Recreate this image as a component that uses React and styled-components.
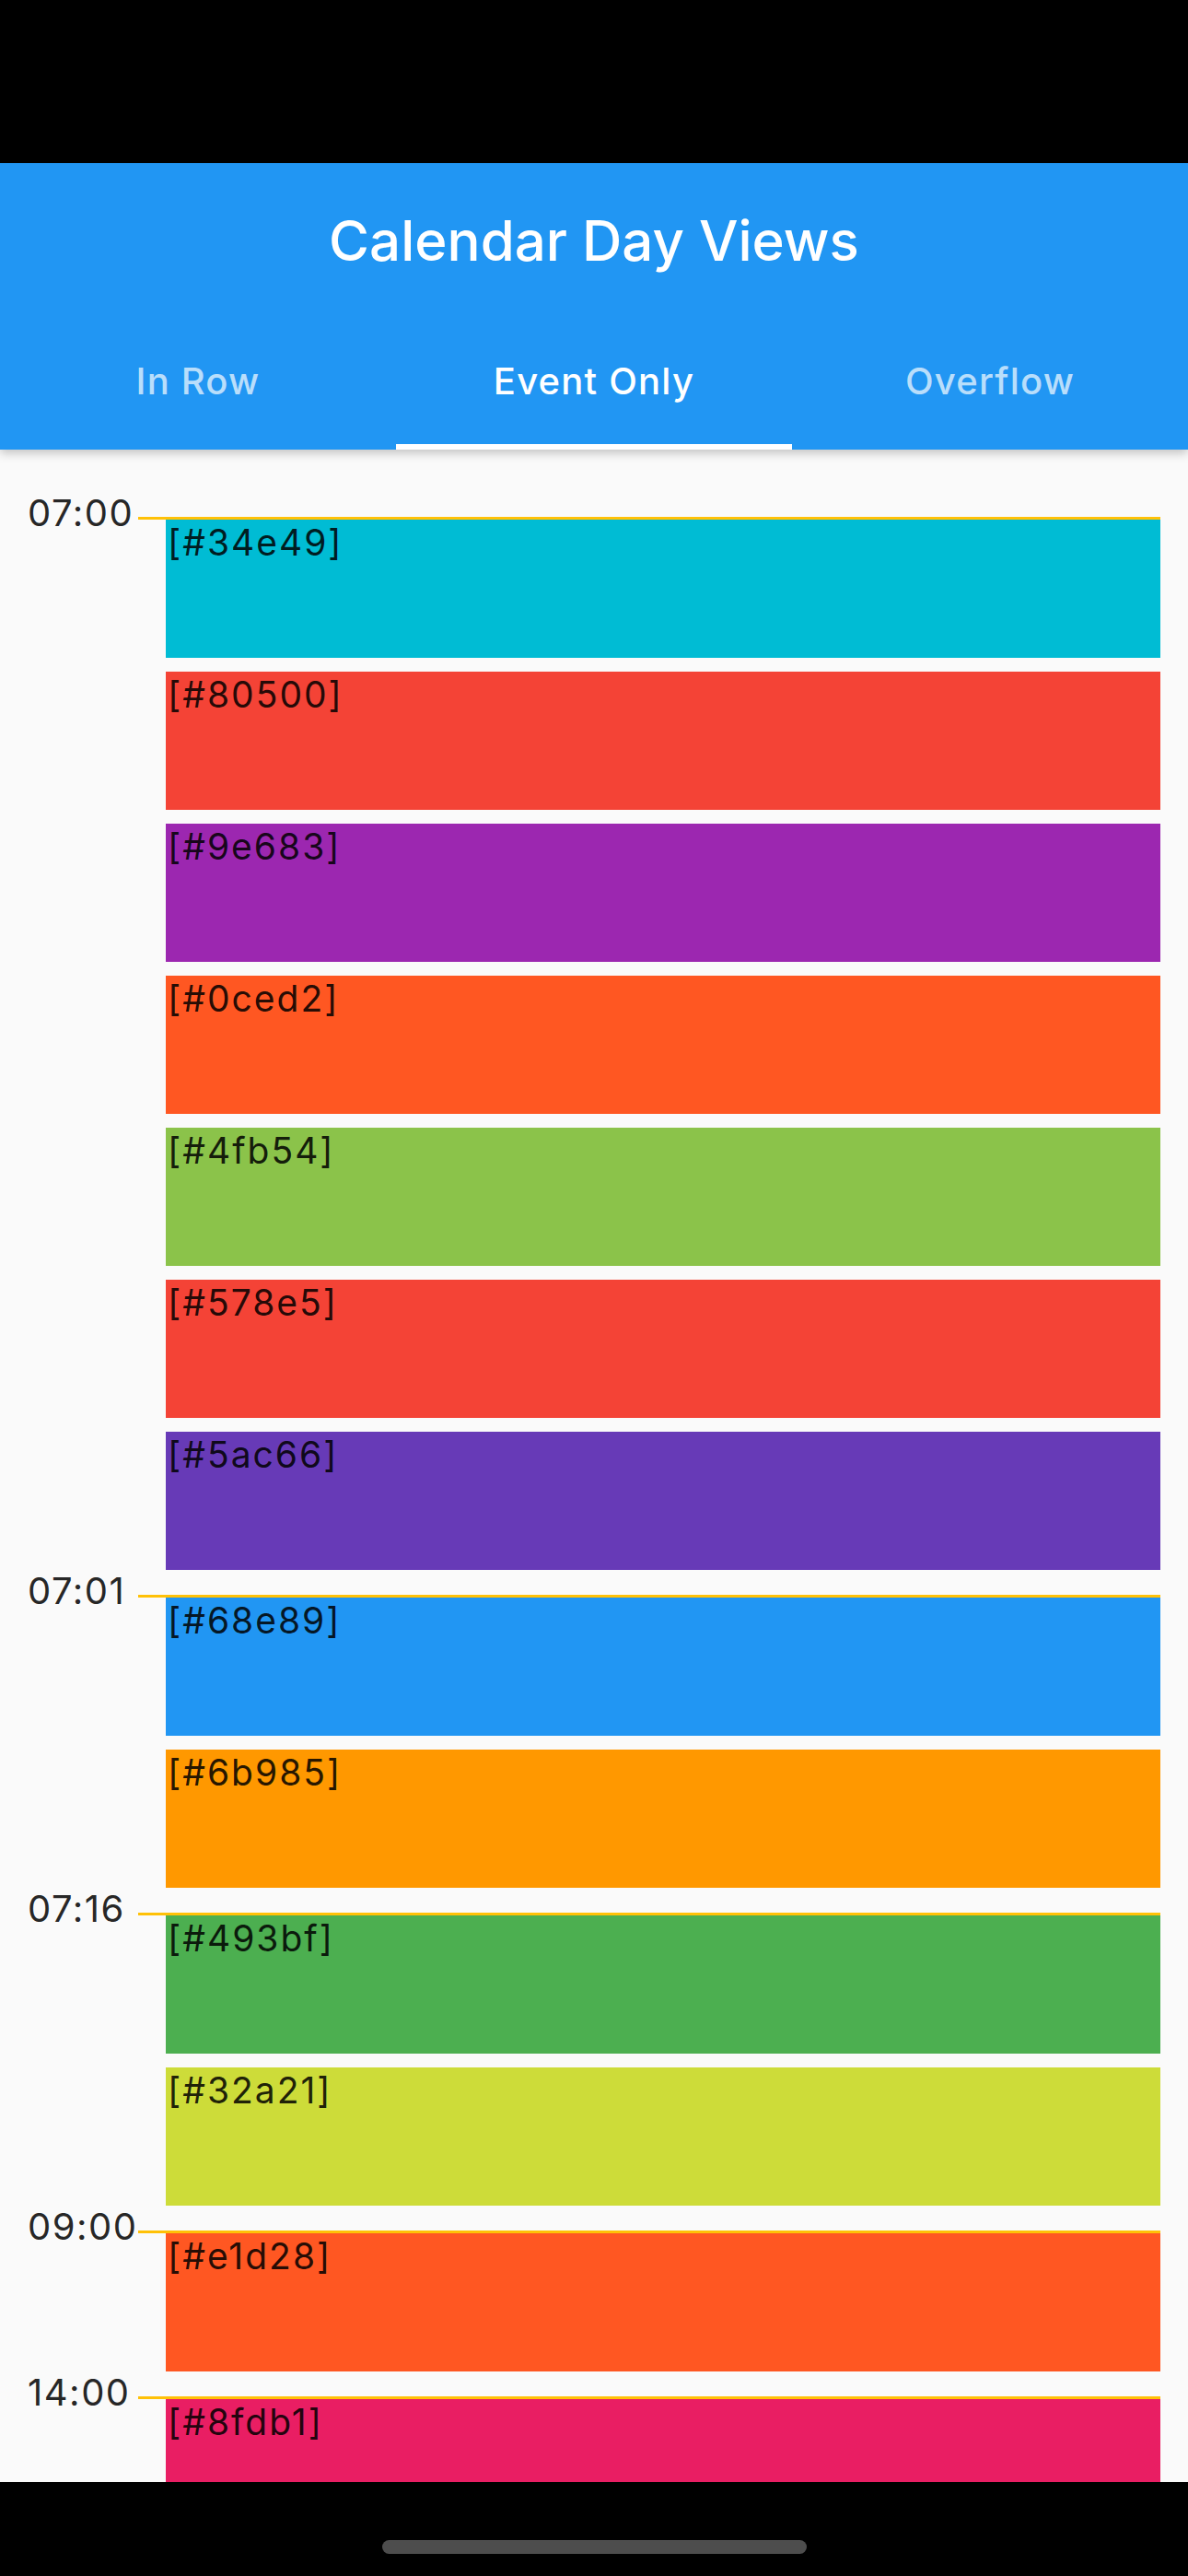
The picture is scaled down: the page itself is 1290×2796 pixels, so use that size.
import styled, { createGlobalStyle } from "styled-components";

const groups = [
  {
    time: "07:00",
    events: [
      ["34e49", "#00BCD4"],
      ["80500", "#F44336"],
      ["9e683", "#9C27B0"],
      ["0ced2", "#FF5722"],
      ["4fb54", "#8BC34A"],
      ["578e5", "#F44336"],
      ["5ac66", "#673AB7"],
    ],
  },
  {
    time: "07:01",
    events: [
      ["68e89", "#2196F3"],
      ["6b985", "#FF9800"],
    ],
  },
  {
    time: "07:16",
    events: [
      ["493bf", "#4CAF50"],
      ["32a21", "#CDDC39"],
    ],
  },
  { time: "09:00", events: [["e1d28", "#FF5722"]] },
  { time: "14:00", events: [["8fdb1", "#E91E63"]] },
];

const tabs = ["In Row", "Event Only", "Overflow"];

export default function App() {
  return (
    <Screen>
      <GlobalStyle />
      <StatusBar />
      <AppBar>
        <Title>Calendar Day Views</Title>
        <TabBar>
          {tabs.map((t, i) => (
            <Tab key={t} $active={i === 1}>
              {t}
            </Tab>
          ))}
        </TabBar>
      </AppBar>
      <Content>
        {groups.map((g) => (
          <Group key={g.time}>
            <TimeLabel>{g.time}</TimeLabel>
            <Track>
              <StartLine />
              <Events>
                {g.events.map(([id, color]) => (
                  <Event key={id} $color={color}>
                    [#{id}]
                  </Event>
                ))}
              </Events>
            </Track>
          </Group>
        ))}
      </Content>
      <NavBar>
        <Handle />
      </NavBar>
    </Screen>
  );
}

const GlobalStyle = createGlobalStyle`
  body {
    margin: 0;
    background: #000;
    font-family: Inter, Roboto, "Noto Sans", sans-serif;
  }
`;

const Screen = styled.div`
  width: 1290px;
  height: 2796px;
  display: flex;
  flex-direction: column;
  background: #fafafa;
  overflow: hidden;
`;

const StatusBar = styled.div`
  height: 177px;
  flex-shrink: 0;
  background: #000;
`;

const AppBar = styled.header`
  position: relative;
  z-index: 1;
  flex-shrink: 0;
  background: #2196f3;
  box-shadow: 0 4px 10px rgba(0, 0, 0, 0.22);
`;

const Title = styled.h1`
  margin: 0;
  height: 168px;
  display: flex;
  align-items: center;
  justify-content: center;
  color: #fff;
  font-size: 60px;
  font-weight: 500;
`;

const TabBar = styled.nav`
  display: grid;
  grid-template-columns: repeat(3, 1fr);
  height: 143px;
`;

const Tab = styled.div`
  display: flex;
  align-items: center;
  justify-content: center;
  color: ${(p) => (p.$active ? "#fff" : "rgba(255, 255, 255, 0.7)")};
  font-size: 40px;
  font-weight: 500;
  letter-spacing: 1.2px;
  border-bottom: 6px solid ${(p) => (p.$active ? "#fff" : "transparent")};
`;

const Content = styled.main`
  flex: 1;
  min-height: 0;
  overflow: hidden;
  padding-top: 73px;
  display: flex;
  flex-direction: column;
  gap: 27px;
`;

const Group = styled.section`
  display: grid;
  grid-template-columns: 150px 1110px;
  flex-shrink: 0;
`;

const TimeLabel = styled.div`
  margin-top: -25px;
  padding-left: 30px;
  height: 42px;
  line-height: 42px;
  font-size: 40px;
  letter-spacing: 1.5px;
  color: rgba(0, 0, 0, 0.87);
`;

const Track = styled.div`
  display: flex;
  flex-direction: column;
`;

const StartLine = styled.div`
  height: 3px;
  background: #ffc107;
`;

const Events = styled.div`
  display: flex;
  flex-direction: column;
  gap: 15px;
  padding-left: 30px;
`;

const Event = styled.div`
  height: 150px;
  flex-shrink: 0;
  box-sizing: border-box;
  padding: 1px 0 0 2px;
  background: ${(p) => p.$color};
  color: rgba(0, 0, 0, 0.87);
  font-size: 39px;
  line-height: 47px;
  letter-spacing: 2px;
`;

const NavBar = styled.footer`
  height: 102px;
  flex-shrink: 0;
  background: #000;
  display: flex;
  justify-content: center;
  padding-top: 63px;
  box-sizing: border-box;
`;

const Handle = styled.div`
  width: 461px;
  height: 15px;
  border-radius: 8px;
  background: #4d4d4d;
`;
